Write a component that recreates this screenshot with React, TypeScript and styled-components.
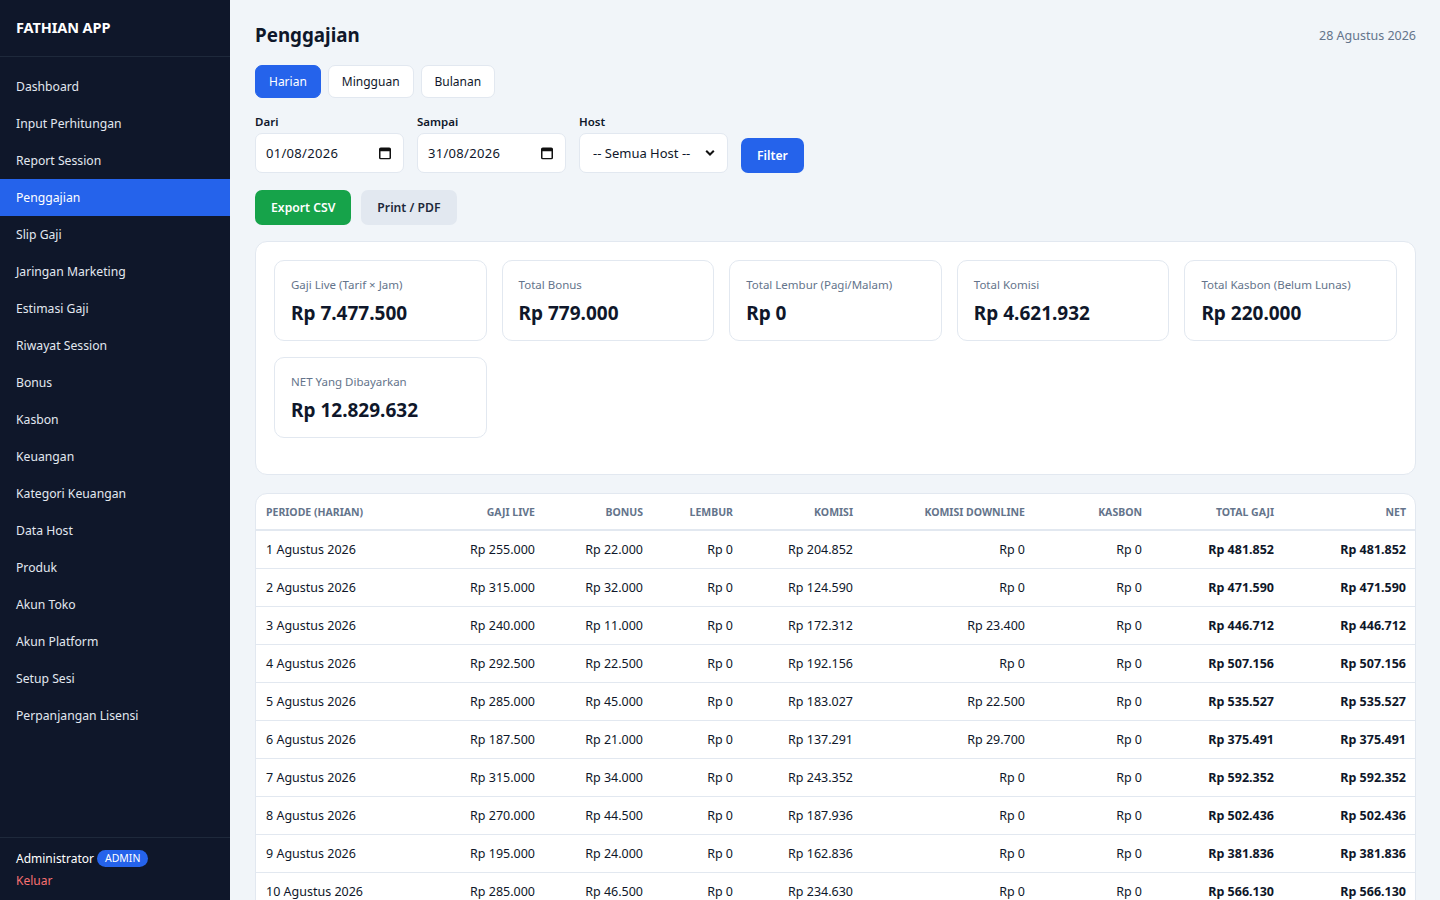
import React from 'react';
import styled, { createGlobalStyle } from 'styled-components';

const GlobalStyle = createGlobalStyle`
  * { box-sizing: border-box; }
  html, body { margin: 0; padding: 0; height: 100%; }
  body {
    font-family: "Noto Sans", "Open Sans", sans-serif;
    color: #0f172a;
    background: #f1f5f9;
  }
`;

const Shell = styled.div`
  display: flex;
  height: 100vh;
  overflow: hidden;
`;

const Sidebar = styled.aside`
  width: 230px;
  flex-shrink: 0;
  background: #0f172a;
  display: flex;
  flex-direction: column;
`;

const Brand = styled.div`
  height: 57px;
  padding: 0 16px;
  display: flex;
  align-items: center;
  padding-bottom: 3px;
  border-bottom: 1px solid #1e293b;
  color: #fff;
  font-weight: 700;
  font-size: 14.5px;
  letter-spacing: -0.1px;
`;

const Nav = styled.nav`
  display: flex;
  flex-direction: column;
  padding-top: 11px;
`;

const NavItem = styled.a<{ $active?: boolean }>`
  display: block;
  height: 37px;
  line-height: 37px;
  padding: 0 16px;
  font-size: 12.2px;
  color: ${(p) => (p.$active ? '#ffffff' : '#e2e8f0')};
  background: ${(p) => (p.$active ? '#2563eb' : 'transparent')};
  text-decoration: none;
  cursor: pointer;
`;

const SideFooter = styled.div`
  margin-top: auto;
  border-top: 1px solid #1e293b;
  padding: 12px 16px 11px;
`;

const UserRow = styled.div`
  display: flex;
  align-items: center;
  gap: 3px;
  color: #fff;
  font-size: 12px;
`;

const RoleBadge = styled.span`
  background: #2563eb;
  color: #fff;
  font-size: 10.5px;
  padding: 1px 8px;
  border-radius: 999px;
  line-height: 15px;
`;

const Logout = styled.a`
  display: block;
  margin-top: 5px;
  color: #f87171;
  font-size: 12px;
  cursor: pointer;
`;

const Main = styled.main`
  flex: 1;
  overflow: auto;
  padding: 20px 24px 24px 25px;
`;

const HeaderRow = styled.div`
  display: flex;
  justify-content: space-between;
  align-items: center;
`;

const Title = styled.h1`
  margin: 0;
  font-size: 18.8px;
  font-weight: 700;
  line-height: 30px;
`;

const DateText = styled.div`
  font-size: 12.5px;
  color: #64748b;
`;

const Tabs = styled.div`
  display: flex;
  gap: 7px;
  margin-top: 15px;
`;

const Tab = styled.button<{ $active?: boolean }>`
  height: 33px;
  padding: 0 13px;
  border-radius: 7px;
  border: 1px solid ${(p) => (p.$active ? '#2563eb' : '#e2e8f0')};
  background: ${(p) => (p.$active ? '#2563eb' : '#ffffff')};
  color: ${(p) => (p.$active ? '#ffffff' : '#0f172a')};
  font-family: inherit;
  font-size: 12px;
  cursor: pointer;
`;

const FilterRow = styled.div`
  display: flex;
  align-items: flex-end;
  gap: 13px;
  margin-top: 16px;
`;

const Field = styled.label`
  display: flex;
  flex-direction: column;
  gap: 4px;
  font-size: 11.5px;
  font-weight: 600;
`;

const InputBox = styled.div`
  position: relative;
  width: 149px;
  height: 40px;
`;

const TextInput = styled.input`
  width: 100%;
  height: 100%;
  border: 1px solid #e2e8f0;
  border-radius: 7px;
  background: #fff;
  padding: 0 30px 0 10px;
  font-family: inherit;
  font-size: 13px;
  color: #0f172a;
  letter-spacing: 0.3px;
`;

const SelectInput = styled.select`
  width: 100%;
  height: 100%;
  border: 1px solid #e2e8f0;
  border-radius: 7px;
  background: #fff;
  padding: 0 28px 0 13px;
  font-family: inherit;
  font-size: 13px;
  color: #0f172a;
  appearance: none;
`;

const FieldIcon = styled.span`
  position: absolute;
  right: 13px;
  top: 50%;
  transform: translateY(-50%);
  display: flex;
  pointer-events: none;
`;

const Button = styled.button<{ $variant: 'primary' | 'success' | 'muted' }>`
  height: 35px;
  padding: 0 16px;
  border: none;
  border-radius: 7px;
  font-family: inherit;
  font-size: 12.2px;
  font-weight: 600;
  cursor: pointer;
  color: ${(p) => (p.$variant === 'muted' ? '#1e293b' : '#fff')};
  background: ${(p) =>
    p.$variant === 'primary' ? '#2563eb' : p.$variant === 'success' ? '#16a34a' : '#e2e8f0'};
`;

const ActionRow = styled.div`
  display: flex;
  gap: 10px;
  margin-top: 17px;
`;

const Panel = styled.section`
  background: #fff;
  border: 1px solid #e2e8f0;
  border-radius: 12px;
`;

const StatsPanel = styled(Panel)`
  margin-top: 16px;
  padding: 18px 18px 36px;
`;

const StatsGrid = styled.div`
  display: grid;
  grid-template-columns: repeat(5, 1fr);
  gap: 16px 15px;
`;

const StatCard = styled.div`
  border: 1px solid #e2e8f0;
  border-radius: 10px;
  padding: 16px 16px 14px;
  height: 81px;
`;

const StatLabel = styled.div`
  font-size: 11.5px;
  color: #64748b;
  line-height: 16px;
`;

const StatValue = styled.div`
  margin-top: 8px;
  font-size: 19px;
  font-weight: 700;
  line-height: 24px;
`;

const TablePanel = styled(Panel)`
  margin-top: 18px;
  overflow: hidden;
`;

const Table = styled.table`
  width: 100%;
  border-collapse: collapse;
  table-layout: fixed;
`;

const Th = styled.th<{ $left?: boolean }>`
  height: 36px;
  padding: 0 10px;
  text-align: ${(p) => (p.$left ? 'left' : 'right')};
  font-size: 10.5px;
  font-weight: 700;
  color: #64748b;
  text-transform: uppercase;
  border-bottom: 2px solid #e2e8f0;
  white-space: nowrap;
`;

const Td = styled.td<{ $left?: boolean; $strong?: boolean }>`
  height: 38px;
  padding: 1px 10px 0;
  text-align: ${(p) => (p.$left ? 'left' : 'right')};
  font-size: 12.5px;
  font-weight: ${(p) => (p.$strong ? 700 : 400)};
  border-bottom: 1px solid #e2e8f0;
  white-space: nowrap;
`;

const CalendarIcon = () => (
  <svg width="12" height="13" viewBox="0 0 12 13">
    <rect x="0.75" y="1.75" width="10.5" height="10.5" rx="1" fill="none" stroke="#111" strokeWidth="1.5" />
    <rect x="0.75" y="1.75" width="10.5" height="3" fill="#111" />
  </svg>
);

const ChevronIcon = () => (
  <svg width="10" height="7" viewBox="0 0 10 7">
    <path d="M1.2 1.2 L5 5 L8.8 1.2" fill="none" stroke="#111" strokeWidth="2" />
  </svg>
);

const navItems = [
  'Dashboard',
  'Input Perhitungan',
  'Report Session',
  'Penggajian',
  'Slip Gaji',
  'Jaringan Marketing',
  'Estimasi Gaji',
  'Riwayat Session',
  'Bonus',
  'Kasbon',
  'Keuangan',
  'Kategori Keuangan',
  'Data Host',
  'Produk',
  'Akun Toko',
  'Akun Platform',
  'Setup Sesi',
  'Perpanjangan Lisensi',
];

const stats = [
  { label: 'Gaji Live (Tarif × Jam)', value: 'Rp 7.477.500' },
  { label: 'Total Bonus', value: 'Rp 779.000' },
  { label: 'Total Lembur (Pagi/Malam)', value: 'Rp 0' },
  { label: 'Total Komisi', value: 'Rp 4.621.932' },
  { label: 'Total Kasbon (Belum Lunas)', value: 'Rp 220.000' },
  { label: 'NET Yang Dibayarkan', value: 'Rp 12.829.632' },
];

const columns = [
  { label: 'Periode (Harian)', width: 185, left: true },
  { label: 'Gaji Live', width: 104 },
  { label: 'Bonus', width: 108 },
  { label: 'Lembur', width: 90 },
  { label: 'Komisi', width: 120 },
  { label: 'Komisi Downline', width: 172 },
  { label: 'Kasbon', width: 117 },
  { label: 'Total Gaji', width: 132 },
  { label: 'Net', width: 132 },
];

type Row = {
  date: string;
  live: string;
  bonus: string;
  lembur: string;
  komisi: string;
  downline: string;
  kasbon: string;
  total: string;
};

const mk = (
  date: string,
  live: string,
  bonus: string,
  komisi: string,
  downline: string,
  total: string
): Row => ({ date, live, bonus, lembur: '0', komisi, downline, kasbon: '0', total });

const rows: Row[] = [
  mk('1 Agustus 2026', '255.000', '22.000', '204.852', '0', '481.852'),
  mk('2 Agustus 2026', '315.000', '32.000', '124.590', '0', '471.590'),
  mk('3 Agustus 2026', '240.000', '11.000', '172.312', '23.400', '446.712'),
  mk('4 Agustus 2026', '292.500', '22.500', '192.156', '0', '507.156'),
  mk('5 Agustus 2026', '285.000', '45.000', '183.027', '22.500', '535.527'),
  mk('6 Agustus 2026', '187.500', '21.000', '137.291', '29.700', '375.491'),
  mk('7 Agustus 2026', '315.000', '34.000', '243.352', '0', '592.352'),
  mk('8 Agustus 2026', '270.000', '44.500', '187.936', '0', '502.436'),
  mk('9 Agustus 2026', '195.000', '24.000', '162.836', '0', '381.836'),
  mk('10 Agustus 2026', '285.000', '46.500', '234.630', '0', '566.130'),
];

export default function App() {
  return (
    <>
      <GlobalStyle />
      <Shell>
        <Sidebar>
          <Brand>FATHIAN APP</Brand>
          <Nav>
            {navItems.map((item) => (
              <NavItem key={item} $active={item === 'Penggajian'}>
                {item}
              </NavItem>
            ))}
          </Nav>
          <SideFooter>
            <UserRow>
              Administrator <RoleBadge>ADMIN</RoleBadge>
            </UserRow>
            <Logout>Keluar</Logout>
          </SideFooter>
        </Sidebar>

        <Main>
          <HeaderRow>
            <Title>Penggajian</Title>
            <DateText>28 Agustus 2026</DateText>
          </HeaderRow>

          <Tabs>
            <Tab $active>Harian</Tab>
            <Tab>Mingguan</Tab>
            <Tab>Bulanan</Tab>
          </Tabs>

          <FilterRow>
            <Field>
              Dari
              <InputBox>
                <TextInput readOnly value="01/08/2026" />
                <FieldIcon>
                  <CalendarIcon />
                </FieldIcon>
              </InputBox>
            </Field>
            <Field>
              Sampai
              <InputBox>
                <TextInput readOnly value="31/08/2026" />
                <FieldIcon>
                  <CalendarIcon />
                </FieldIcon>
              </InputBox>
            </Field>
            <Field>
              Host
              <InputBox>
                <SelectInput defaultValue="">
                  <option value="">-- Semua Host --</option>
                </SelectInput>
                <FieldIcon>
                  <ChevronIcon />
                </FieldIcon>
              </InputBox>
            </Field>
            <Button $variant="primary">Filter</Button>
          </FilterRow>

          <ActionRow>
            <Button $variant="success">Export CSV</Button>
            <Button $variant="muted">Print / PDF</Button>
          </ActionRow>

          <StatsPanel>
            <StatsGrid>
              {stats.map((s) => (
                <StatCard key={s.label}>
                  <StatLabel>{s.label}</StatLabel>
                  <StatValue>{s.value}</StatValue>
                </StatCard>
              ))}
            </StatsGrid>
          </StatsPanel>

          <TablePanel>
            <Table>
              <colgroup>
                {columns.map((c) => (
                  <col key={c.label} style={{ width: c.width }} />
                ))}
              </colgroup>
              <thead>
                <tr>
                  {columns.map((c) => (
                    <Th key={c.label} $left={c.left}>
                      {c.label}
                    </Th>
                  ))}
                </tr>
              </thead>
              <tbody>
                {rows.map((r) => (
                  <tr key={r.date}>
                    <Td $left>{r.date}</Td>
                    <Td>Rp {r.live}</Td>
                    <Td>Rp {r.bonus}</Td>
                    <Td>Rp {r.lembur}</Td>
                    <Td>Rp {r.komisi}</Td>
                    <Td>Rp {r.downline}</Td>
                    <Td>Rp {r.kasbon}</Td>
                    <Td $strong>Rp {r.total}</Td>
                    <Td $strong>Rp {r.total}</Td>
                  </tr>
                ))}
              </tbody>
            </Table>
          </TablePanel>
        </Main>
      </Shell>
    </>
  );
}
